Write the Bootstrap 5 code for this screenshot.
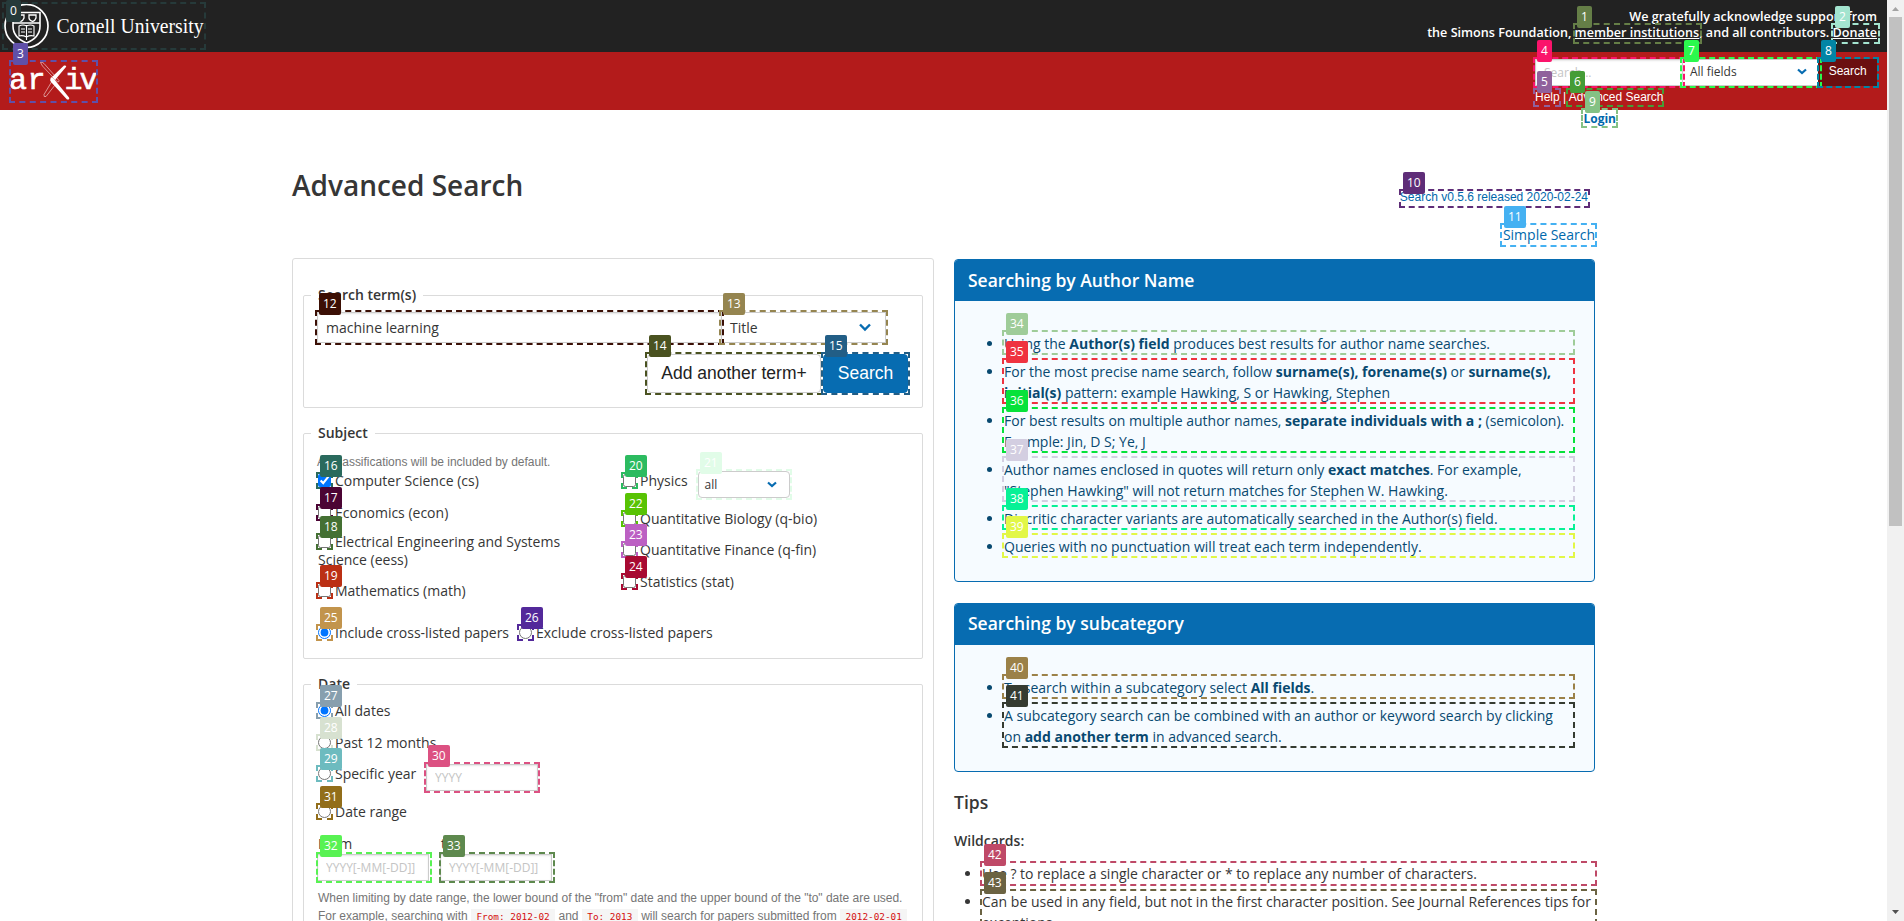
<!DOCTYPE html>
<html lang="en">
<head>
<meta charset="utf-8">
<title>Advanced Search | arXiv e-print repository</title>
<link rel="stylesheet" href="https://cdn.jsdelivr.net/npm/bootstrap@5.3.0/dist/css/bootstrap.min.css">
<style>
body{font-family:"Open Sans",sans-serif;font-size:14px;line-height:21px;color:#363636;background:#fff;height:921px;overflow:hidden}
a{color:#0068ac;text-decoration:none}
.ar{font-family:"Liberation Sans",sans-serif}
.page{width:1887px;height:921px;overflow:hidden}
.top{height:52px;background:#222;padding:6px 10px 0 3px}
.thanks{font-size:12.6px;line-height:16px;font-weight:600;color:#fff;text-align:right;padding-top:3px}
.thanks a{color:#fff;text-decoration:underline}
.brandbar{height:58px;background:#b31b1b;padding:7px 10px 0 9px}
.srch{width:342px}
.fld{border:1px solid #ccc;background:#fff;color:#363636;box-shadow:inset 0 1px 2px rgba(10,10,10,.1);display:flex;align-items:center;padding:0 8px;outline:0}
.fld::placeholder{color:#c4c4c4}
.sel{box-shadow:none;justify-content:space-between}
.h27{height:27px;font-size:12px}
.h31{height:31px}
.w112{width:112px;font-size:12px}
.go{width:59px;height:27px;background:#6b0f10;color:#fff;font-size:12px;text-align:center;line-height:25px;margin-left:-1px}
.help{font-size:12px;line-height:16px;color:#fff;padding-top:3px}
.help a{color:#fff}
.login{font-size:12px;line-height:16px;font-weight:700;padding:1px 271px 0 0;height:59px}
.wrap{width:1303px;margin-left:292px}
h1{font-size:28px;line-height:32px;font-weight:600;margin:0}
.ver{font-size:12px;line-height:15px;padding:21px 7px 0 0}
.simple{line-height:21px;margin-top:19px}
.headrow{height:89px}
.formbox{width:642px;height:760px;border:1px solid #dbdbdb;border-radius:3px;padding:26px 10px 0}
fieldset{border:1px solid #dbdbdb;border-radius:2px;padding:7px 13px 0;width:620px;margin-bottom:15px}
legend{float:none;width:auto;font-size:14px;line-height:20px;height:20px;font-weight:600;padding:0 7px;margin:0 0 0 -6px}
.fs1{height:123px}.fs2{height:236px;padding-top:10px}.fs3{height:400px;padding-top:8px}
.bigbtn{height:39px;font-size:17.5px;line-height:37px;border:1px solid #ccc;border-radius:4px;text-align:center;color:#222}
.bigbtn.prim{background:#076cb1;border-color:#076cb1;color:#fff}
.hint{font-size:12px;line-height:18px;color:#757575;letter-spacing:-.015px}
.ln{line-height:18px;padding-left:1px;display:block}
.ln input{width:13px;height:13px;margin:2px 4px 0 0;vertical-align:top}
.ln span{vertical-align:top}
.hint code{font-family:"DejaVu Sans Mono",monospace;font-size:9.4px;color:#d40f0f;background:#f5f5f5;padding:2px 5.5px 3px}
.info{width:641px;border:1px solid #076cb1;border-radius:4px;background:#f6fbff;color:#084970;overflow:hidden}
.info h2{font-size:17.5px;line-height:40px;height:41px;margin:0;padding:0 13px;background:#076cb1;color:#fff;font-weight:600}
.info.second h2{line-height:38px}
.info ul{padding:32px 22px 0 49px;margin:0}
li+li{margin-top:7px}
li{line-height:21px}
.bar{width:17px;height:921px;background:#f1f1f1}
.thumb{width:13px;height:509px;background:#c1c1c1}
.marks{position:absolute;inset:0;overflow:hidden;pointer-events:none}
.mk{position:absolute;border:2px dashed var(--c)}
.tag{position:absolute;height:22px;border-radius:2px;padding:0 4px;font-size:12px;line-height:22px;color:#fff;background:var(--c)}
</style>
<script src="https://cdn.jsdelivr.net/npm/bootstrap@5.3.0/dist/js/bootstrap.bundle.min.js"></script>
</head>
<body class="d-flex position-relative">
<div class="page">
  <header>
    <div class="top d-flex justify-content-between">
      <svg width="206" height="46" viewBox="3 6 206 46" style="margin-top:-2px" fill="none" stroke="#fff">
        <g transform="translate(0 2)"><circle cx="26.500" cy="26" r="21.500" stroke-width="1.700"/>
        <path d="M13 12.500H40V26C40 35 34 40 26.500 43 19 40 13 35 13 26ZM13 23H40" stroke-width="1.600"/>
        <path d="M17 15h7v3q-1 3-3.500 3.500Q17 20 17 18ZM29 15h7v3q-1 3-3.500 3.500Q29 20 29 18Z" stroke-width="1.300"/>
        <path d="M26.500 25v15M19 26q4-2 7.500 0 4-2 7.500 0v10q-4-1-7.500 1-4-2-7.500-1zM21 29h4M21 32h4M28 29h4M28 32h4" stroke-width="1.100"/></g>
        <text x="56.500" y="35" font-family="Liberation Serif, serif" font-size="20" textLength="147" lengthAdjust="spacingAndGlyphs" fill="#fff" stroke="none">Cornell University</text>
      </svg>
      <div class="thanks">We gratefully acknowledge support from<br>the Simons Foundation, <a href="#">member institutions</a>, and all contributors. <a href="#">Donate</a></div>
    </div>
    <div class="brandbar d-flex justify-content-between">
      <svg width="90" height="44" viewBox="9 59 90 44" fill="#fff">
        <g font-family="Liberation Mono, monospace" font-size="30" stroke="#fff" stroke-width=".6"><text x="9" y="89">a</text><text x="27.500" y="89">r</text><text x="64.500" y="89">i</text><text x="79.500" y="89">v</text></g>
        <path d="M52 77 64 65.500Q67 65 66 67L55 80Z"/>
        <path d="M50.500 78.500Q51 76 54 79L69 97.500Q70 100 67 99.500L51 82Q49.500 80 50.500 78.500Z"/>
        <path d="M40.500 62.500Q42 61.500 44 63.500L59 80.500Q59.500 82 57.500 82L42.500 66ZM51.500 82 44 94.500Q43.500 97.500 46 96.500L55 85" fill="none" stroke="#fff" stroke-opacity=".75" stroke-width=".7"/>
      </svg>
      <div class="srch">
        <div class="d-flex">
          <input class="fld h27" style="width:148px" placeholder="Search..." aria-label="Search term">
          <div class="fld sel h27" style="width:138px;margin-left:-1px;padding:0 11px 2px 7px">All fields<svg width="10" height="7" viewBox="0 0 10 7" fill="none" stroke="#076cb1" stroke-width="2.200"><path d="M1 1.500 5 5 9 1.500"/></svg></div>
          <div class="go ar">Search</div>
        </div>
        <div class="help ar"><a href="#">Help</a> | <a href="#">Advanced Search</a></div>
      </div>
    </div>
    <div class="login text-end"><a href="#">Login</a></div>
  </header>
  <main class="wrap">
    <div class="headrow d-flex justify-content-between">
      <h1>Advanced Search</h1>
      <div class="text-end"><div class="ver ar"><a href="#">Search v0.5.6 released 2020-02-24</a></div><div class="simple"><a href="#">Simple Search</a></div></div>
    </div>
    <div class="d-flex justify-content-between">
      <form class="formbox">
        <fieldset class="fs1"><legend>Search term(s)</legend>
          <div class="d-flex"><input class="fld h31" style="width:405px" value="machine learning" aria-label="Term">
            <div class="fld sel h31" style="width:165px;margin-left:-1px;padding-right:14px">Title<svg width="12" height="9" viewBox="0 0 12 9" fill="none" stroke="#076cb1" stroke-width="2.400"><path d="M1 1.500 6 6.500 11 1.500"/></svg></div></div>
          <div class="d-flex ar" style="margin:11px 0 0 330px;gap:2px"><div class="bigbtn" style="width:174px">Add another term+</div><div class="bigbtn prim" style="width:85px">Search</div></div>
        </fieldset>
        <fieldset class="fs2"><legend>Subject</legend>
          <div class="d-flex">
            <div style="width:305px;height:152px">
              <div class="hint ar">All classifications will be included by default.</div>
              <label class="ln" style="margin-top:1px"><input type="checkbox" checked><span>Computer Science (cs)</span></label>
              <label class="ln" style="margin-top:14px"><input type="checkbox"><span>Economics (econ)</span></label>
              <label class="ln" style="margin-top:11px"><input type="checkbox"><span>Electrical Engineering and Systems</span></label>
              <div style="line-height:18px;padding-left:1px">Science (eess)</div>
              <label class="ln" style="margin-top:13px"><input type="checkbox"><span>Mathematics (math)</span></label>
            </div>
            <div>
              <div class="d-flex" style="margin-top:18px"><label class="ln" style="margin-top:1px"><input type="checkbox"><span>Physics</span></label><div class="fld sel h27 rounded-1" style="width:92px;margin-left:10px;padding:0 12px 0 6px">all<svg width="10" height="7" viewBox="0 0 10 7" fill="none" stroke="#076cb1" stroke-width="2.200"><path d="M1 1.500 5 5 9 1.500"/></svg></div></div>
              <label class="ln" style="margin-top:12px"><input type="checkbox"><span>Quantitative Biology (q-bio)</span></label>
              <label class="ln" style="margin-top:13px"><input type="checkbox"><span>Quantitative Finance (q-fin)</span></label>
              <label class="ln" style="margin-top:14px"><input type="checkbox"><span>Statistics (stat)</span></label>
            </div>
          </div>
          <div class="d-flex" style="margin-top:19px"><label class="ln" style="width:201px"><input type="radio" checked name="x"><span>Include cross-listed papers</span></label><label class="ln"><input type="radio" name="x"><span>Exclude cross-listed papers</span></label></div>
        </fieldset>
        <fieldset class="fs3"><legend>Date</legend>
          <label class="ln"><input type="radio" name="d" checked><span>All dates</span></label>
          <label class="ln" style="margin-top:14px"><input type="radio" name="d"><span>Past 12 months</span></label>
          <div class="d-flex" style="margin-top:12px"><label class="ln" style="margin-top:1px;width:109px"><input type="radio" name="d"><span>Specific year</span></label><input class="fld h27 w112" placeholder="YYYY" aria-label="Year"></div>
          <label class="ln" style="margin-top:12px"><input type="radio" name="d"><span>Date range</span></label>
          <div class="d-flex" style="margin-top:13px;gap:11px">
            <div><div style="line-height:20px;padding-left:1px">From</div><input class="fld h27 w112" placeholder="YYYY[-MM[-DD]]" aria-label="From"></div>
            <div><div style="line-height:20px;padding-left:1px">to</div><input class="fld h27 w112" placeholder="YYYY[-MM[-DD]]" aria-label="To"></div>
          </div>
          <div class="hint ar text-nowrap" style="margin-top:8px;padding-left:1px">When limiting by date range, the lower bound of the "from" date and the upper bound of the "to" date are used.<br>For example, searching with <code>From: 2012-02</code> and <code>To: 2013</code> will search for papers submitted from <code>2012-02-01</code></div>
        </fieldset>
      </form>
      <div style="width:641px;padding-top:1px">
        <section class="info" style="height:323px"><h2>Searching by Author Name</h2>
          <ul><li>Using the <b>Author(s) field</b> produces best results for author name searches.</li>
          <li>For the most precise name search, follow <b>surname(s), forename(s)</b> or <b>surname(s), initial(s)</b> pattern: example Hawking, S or Hawking, Stephen</li>
          <li>For best results on multiple author names, <b>separate individuals with a ;</b> (semicolon). Example: Jin, D S; Ye, J</li>
          <li>Author names enclosed in quotes will return only <b>exact matches</b>. For example, "Stephen Hawking" will not return matches for Stephen W. Hawking.</li>
          <li>Diacritic character variants are automatically searched in the Author(s) field.</li>
          <li>Queries with no punctuation will treat each term independently.</li></ul></section>
        <section class="info second" style="height:169px;margin-top:21px"><h2>Searching by subcategory</h2>
          <ul><li>To search within a subcategory select <b>All fields</b>.</li>
          <li>A subcategory search can be combined with an author or keyword search by clicking on <b>add another term</b> in advanced search.</li></ul></section>
        <h2 style="font-size:17.500px;line-height:22px;font-weight:600;margin:19px 0 0">Tips</h2>
        <div style="font-weight:600;margin-top:17px">Wildcards:</div>
        <ul style="padding-left:28px;margin:12px 0 0"><li>Use ? to replace a single character or * to replace any number of characters.</li><li>Can be used in any field, but not in the first character position. See Journal References tips for exceptions.</li></ul>
      </div>
    </div>
  </main>
</div>
<div class="bar d-flex flex-column align-items-center">
  <svg width="17" height="17" viewBox="0 0 17 17"><path d="M5 11 8.500 7 12 11Z" fill="#a3a3a3"/></svg>
  <div class="thumb"></div>
  <svg class="mt-auto" width="17" height="17" viewBox="0 0 17 17"><path d="M5 6 8.500 10 12 6Z" fill="#505050"/></svg>
</div>
<div class="marks" id="marks"></div>
<script>
// Element markers: left, top, right, bottom, colour
const marks=[[2,2,206,50,'#263a3a'],[1573,23,1702,44,'#657e47'],[1831,23,1880,44,'#a3e4cf'],[9,60,98,103,'#6050a8'],
[1533,57,1685,88,'#fb146b'],[1533,88,1561,107,'#90619c'],[1566,88,1664,107,'#459c36'],[1680,57,1822,88,'#2bf94d'],[1817,57,1879,88,'#0285a5'],[1581,108,1618,128,'#84c184'],
[1399,189,1590,208,'#5f2d78'],[1500,223,1597,247,'#45b1f2'],[315,310,724,345,'#3b0f05'],[719,310,888,345,'#958550'],[645,352,823,395,'#4a5220'],[821,352,910,395,'#225e86'],
[316,472,333,489,'#2a6a5d'],[316,504,333,521,'#4b0434'],[316,533,333,550,'#447033'],[316,582,333,599,'#bb3014'],[621,472,638,489,'#2cbb60'],[696,469,792,500,'#e1fce8'],
[621,510,638,527,'#58c304'],[621,541,638,558,'#bc60c3'],[621,573,638,590,'#a80a32'],[316,624,333,641,'#c2944c'],[517,624,534,641,'#53299a'],[316,702,333,719,'#879fae'],
[316,734,333,751,'#d7e1d0'],[316,765,333,782,'#6dbbbf'],[424,762,540,793,'#dc5182'],[316,803,333,820,'#926e1a'],[316,852,432,883,'#58f253'],[439,852,555,883,'#5e894e'],
[1002,330,1575,355,'#9fcc99'],[1002,358,1575,404,'#ef3340'],[1002,407,1575,453,'#06e23a'],[1002,456,1575,502,'#d3cee1'],[1002,505,1575,530,'#07f196'],[1002,533,1575,558,'#e2f746'],
[1002,674,1575,699,'#9b8148'],[1002,702,1575,748,'#353b31'],[980,861,1597,886,'#bf4967'],[980,889,1597,935,'#6b6342']];
const host=document.getElementById('marks');
marks.forEach(([l,t,r,b,c],i)=>{
  host.insertAdjacentHTML('beforeend',`<div class="mk" style="--c:${c};left:${l}px;top:${t}px;width:${r-l}px;height:${b-t}px"></div><div class="tag" style="--c:${c};left:${l+4}px;top:${Math.max(0,t-17)}px">${i}</div>`);
});
</script>
</body>
</html>
